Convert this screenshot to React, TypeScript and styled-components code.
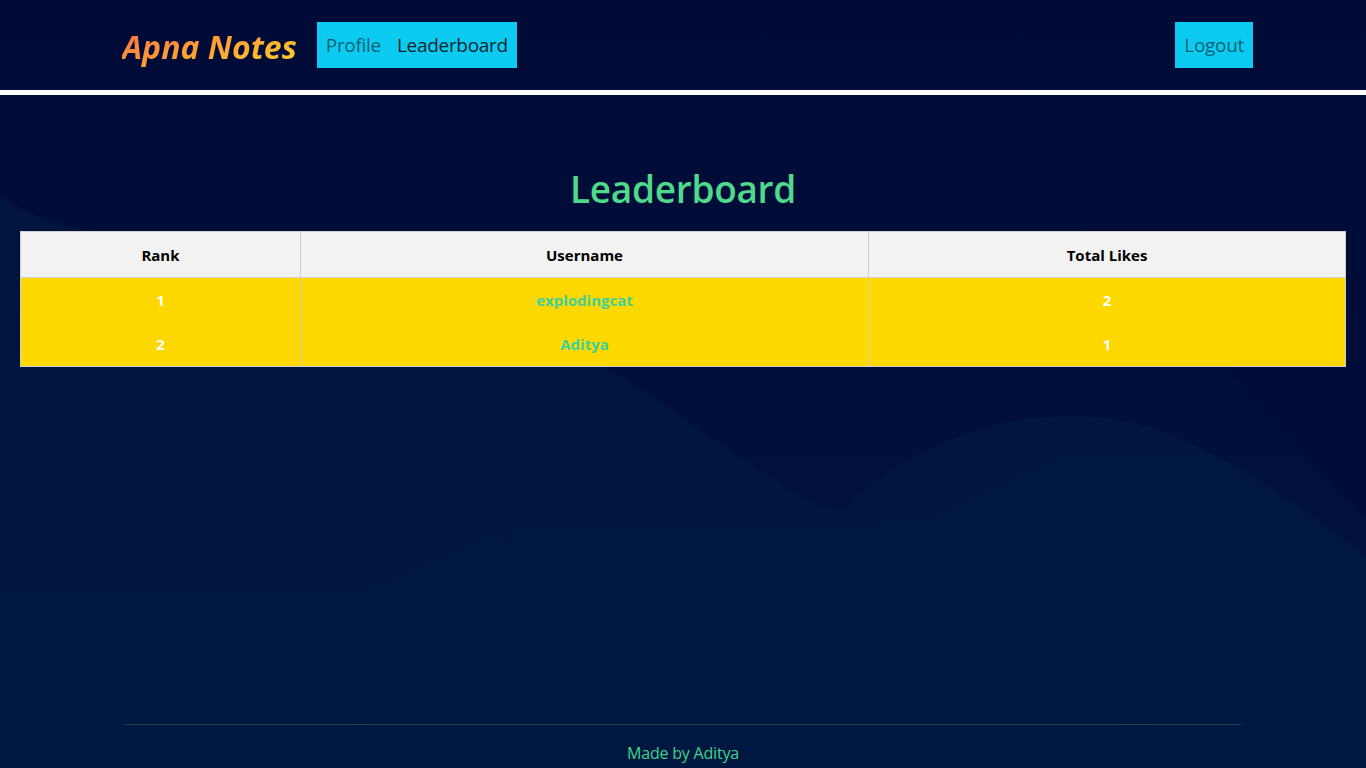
import React from "react";
import styled, { createGlobalStyle } from "styled-components";

const Global = createGlobalStyle`
  html, body { margin: 0; padding: 0; }
  body {
    font-family: "Open Sans", "Noto Sans", sans-serif;
    background: #000b37;
  }
`;

const Page = styled.div`
  position: relative;
  min-height: 100vh;
  display: flex;
  flex-direction: column;
  overflow: hidden;
`;

const Backdrop = styled.svg`
  position: absolute;
  inset: 0;
  width: 100%;
  height: 100%;
  z-index: 0;
  pointer-events: none;
`;

const Layer = styled.div`
  position: relative;
  z-index: 1;
  display: flex;
  flex-direction: column;
  flex: 1;
`;

const NavBar = styled.nav`
  height: 90px;
  display: flex;
  align-items: center;
  padding: 0 113px 0 122px;
  border-bottom: 5px solid #ffffff;
  box-sizing: content-box;
`;

const Brand = styled.a`
  font-family: "Open Sans", sans-serif;
  font-style: italic;
  font-weight: 700;
  font-size: 32px;
  background: linear-gradient(160deg, #ff7e3e 15%, #fbc52b 85%);
  -webkit-background-clip: text;
  background-clip: text;
  color: transparent;
  margin-right: 16px;
  margin-top: 2px;
  padding-right: 4px;
`;

const NavGroup = styled.div`
  display: flex;
  align-items: center;
  height: 46px;
  padding: 0 9px;
  gap: 16px;
  background: #0dcaf0;
`;

const Spacer = styled.div`
  flex: 1;
`;

const NavLink = styled.a<{ $active?: boolean }>`
  font-size: 19px;
  color: ${(p) => (p.$active ? "rgba(0,0,0,0.85)" : "rgba(0,0,0,0.55)")};
  text-decoration: none;
  letter-spacing: -0.3px;
`;

const Main = styled.main`
  display: flex;
  flex-direction: column;
  align-items: stretch;
  padding: 0 20px;
`;

const Title = styled.h1`
  margin: 68px 0 0;
  text-align: center;
  font-size: 37px;
  line-height: 52px;
  font-weight: 600;
  color: #4fd98a;
  letter-spacing: -0.3px;
`;

const Table = styled.table`
  margin-top: 16px;
  width: 100%;
  border-collapse: collapse;
  table-layout: fixed;
  border: 1px solid #cfcfcf;
  font-size: 15px;
  font-weight: 700;
`;

const HeadCell = styled.th<{ $w: string }>`
  width: ${(p) => p.$w};
  height: 45px;
  background: #f2f2f2;
  color: #000;
  border: 1px solid #cfcfcf;
  text-align: center;
  padding: 0;
`;

const Row = styled.tr`
  background: #ffd800;
`;

const Cell = styled.td<{ $name?: boolean }>`
  height: 44px;
  text-align: center;
  padding: 0;
  border-left: 1px solid #cfcfcf;
  border-right: 1px solid #cfcfcf;
  color: ${(p) => (p.$name ? "#3fd197" : "#ffffff")};
`;

const Footer = styled.footer`
  margin: auto 125px 0;
  border-top: 1px solid #174a47;
  height: 39px;
  display: flex;
  align-items: flex-end;
  justify-content: center;
  padding-bottom: 4px;
`;

const FooterText = styled.p`
  margin: 0;
  font-size: 16px;
  color: #3fd48a;
  letter-spacing: -0.2px;
`;

const rows = [
  { rank: 1, name: "explodingcat", likes: 2 },
  { rank: 2, name: "Aditya", likes: 1 },
];

export default function App() {
  return (
    <Page>
      <Global />
      <Backdrop viewBox="0 0 1366 768" preserveAspectRatio="none">
        <defs>
          <linearGradient id="bg" x1="0" y1="0" x2="0" y2="1">
            <stop offset="0" stopColor="#000a37" />
            <stop offset="1" stopColor="#00153d" />
          </linearGradient>
          <linearGradient id="w1" x1="0" y1="0" x2="1" y2="1">
            <stop offset="0" stopColor="#00173f" />
            <stop offset="1" stopColor="#001a42" />
          </linearGradient>
        </defs>
        <rect width="1366" height="768" fill="url(#bg)" />
        <path
          d="M0 195 C60 240 140 235 260 245 C430 265 560 330 700 430 C780 490 830 510 840 512 C930 430 1020 410 1106 418 C1200 430 1290 500 1366 556 L1366 768 L0 768 Z"
          fill="url(#w1)"
          opacity="0.7"
        />
        <path
          d="M300 768 C500 600 700 560 1000 640 C1150 690 1280 730 1366 760 L1366 768 Z"
          fill="#001a44"
          opacity="0.35"
        />
        <path
          d="M1000 150 C1120 260 1220 360 1366 520 L1366 150 Z"
          fill="#000c38"
          opacity="0.6"
        />
      </Backdrop>
      <Layer>
        <NavBar>
          <Brand>Apna Notes</Brand>
          <NavGroup>
            <NavLink>Profile</NavLink>
            <NavLink $active>Leaderboard</NavLink>
          </NavGroup>
          <Spacer />
          <NavGroup>
            <NavLink>Logout</NavLink>
          </NavGroup>
        </NavBar>
        <Main>
          <Title>Leaderboard</Title>
          <Table>
            <thead>
              <tr>
                <HeadCell $w="21.1%">Rank</HeadCell>
                <HeadCell $w="42.9%">Username</HeadCell>
                <HeadCell $w="36%">Total Likes</HeadCell>
              </tr>
            </thead>
            <tbody>
              {rows.map((r) => (
                <Row key={r.rank}>
                  <Cell>{r.rank}</Cell>
                  <Cell $name>{r.name}</Cell>
                  <Cell>{r.likes}</Cell>
                </Row>
              ))}
            </tbody>
          </Table>
        </Main>
        <Footer>
          <FooterText>Made by Aditya</FooterText>
        </Footer>
      </Layer>
    </Page>
  );
}
